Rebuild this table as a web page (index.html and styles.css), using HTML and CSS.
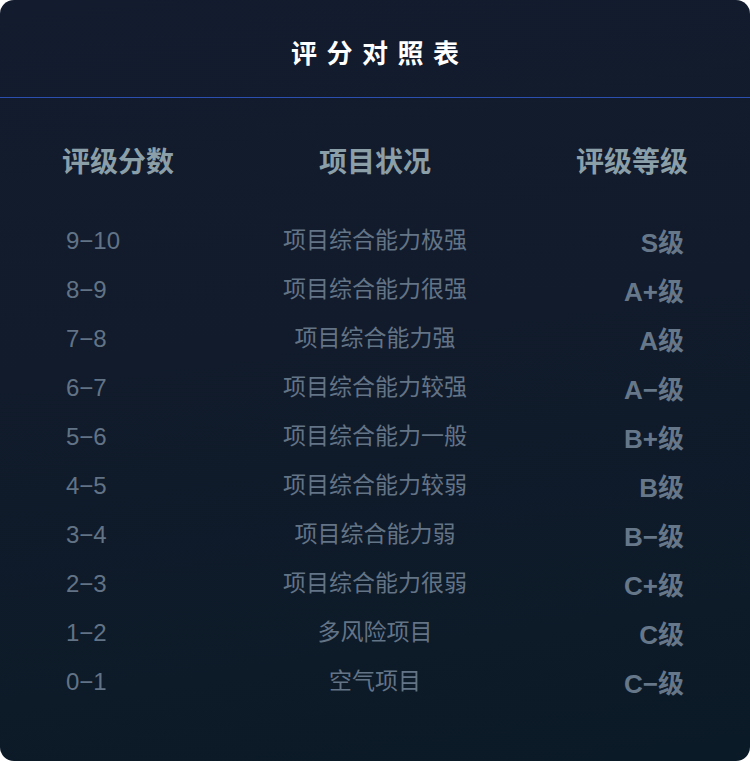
FILE: index.html
```html
<!DOCTYPE html>
<html lang="zh">
<head>
<meta charset="utf-8">
<title>评分对照表</title>
<link rel="stylesheet" href="styles.css">
</head>
<body>
<div class="card">
  <div class="title">评分对照表</div>
  <div class="thead">
    <div class="head left">评级分数</div>
    <div class="head mid">项目状况</div>
    <div class="head right">评级等级</div>
  </div>
  <div class="tbody">
    <div class="cell score">9−10</div><div class="cell desc">项目综合能力极强</div><div class="cell grade">S级</div>
    <div class="cell score">8−9</div><div class="cell desc">项目综合能力很强</div><div class="cell grade">A+级</div>
    <div class="cell score">7−8</div><div class="cell desc">项目综合能力强</div><div class="cell grade">A级</div>
    <div class="cell score">6−7</div><div class="cell desc">项目综合能力较强</div><div class="cell grade">A−级</div>
    <div class="cell score">5−6</div><div class="cell desc">项目综合能力一般</div><div class="cell grade">B+级</div>
    <div class="cell score">4−5</div><div class="cell desc">项目综合能力较弱</div><div class="cell grade">B级</div>
    <div class="cell score">3−4</div><div class="cell desc">项目综合能力弱</div><div class="cell grade">B−级</div>
    <div class="cell score">2−3</div><div class="cell desc">项目综合能力很弱</div><div class="cell grade">C+级</div>
    <div class="cell score">1−2</div><div class="cell desc">多风险项目</div><div class="cell grade">C级</div>
    <div class="cell score">0−1</div><div class="cell desc">空气项目</div><div class="cell grade">C−级</div>
  </div>
</div>
</body>
</html>
```

FILE: styles.css
```css
html, body {
  margin: 0;
  padding: 0;
  background: #ffffff;
}

body {
  font-family: "Liberation Sans", "Noto Sans CJK SC", sans-serif;
}

.card {
  width: 750px;
  height: 761px;
  box-sizing: border-box;
  border-radius: 14px;
  overflow: hidden;
  background: linear-gradient(172deg, #131c2e 0%, #111b2b 45%, #0b1a27 100%);
}

.title {
  height: 98px;
  box-sizing: border-box;
  padding-top: 6px;
  display: flex;
  align-items: center;
  justify-content: center;
  border-bottom: 1px solid #2a4fae;
  color: #ffffff;
  font-family: "Noto Sans CJK SC", sans-serif;
  font-weight: 700;
  font-size: 26px;
  letter-spacing: 9.5px;
  text-indent: 9.5px;
}

.thead,
.tbody {
  display: grid;
  grid-template-columns: 1fr 1fr 1fr;
  padding: 0 62px;
}

.thead {
  margin-top: 42px;
  height: 40px;
}

.tbody {
  margin-top: 35px;
  grid-auto-rows: 49px;
}

.head {
  font-family: "Noto Sans CJK SC", sans-serif;
  font-weight: 700;
  font-size: 28px;
  color: #8b9fa9;
  line-height: 40px;
  white-space: nowrap;
}

.left { text-align: left; }
.mid { text-align: center; }
.right { text-align: right; }

.cell {
  display: flex;
  align-items: center;
  white-space: nowrap;
}

.score {
  padding-left: 4px;
  padding-top: 2px;
  font-size: 24px;
  color: #627386;
}

.desc {
  justify-content: center;
  font-family: "Noto Sans CJK SC", sans-serif;
  font-size: 23px;
  color: #647487;
  padding-bottom: 3px;
}

.grade {
  justify-content: flex-end;
  padding-right: 4px;
  padding-top: 2px;
  font-size: 26px;
  font-weight: 700;
  color: #66778a;
}
```
